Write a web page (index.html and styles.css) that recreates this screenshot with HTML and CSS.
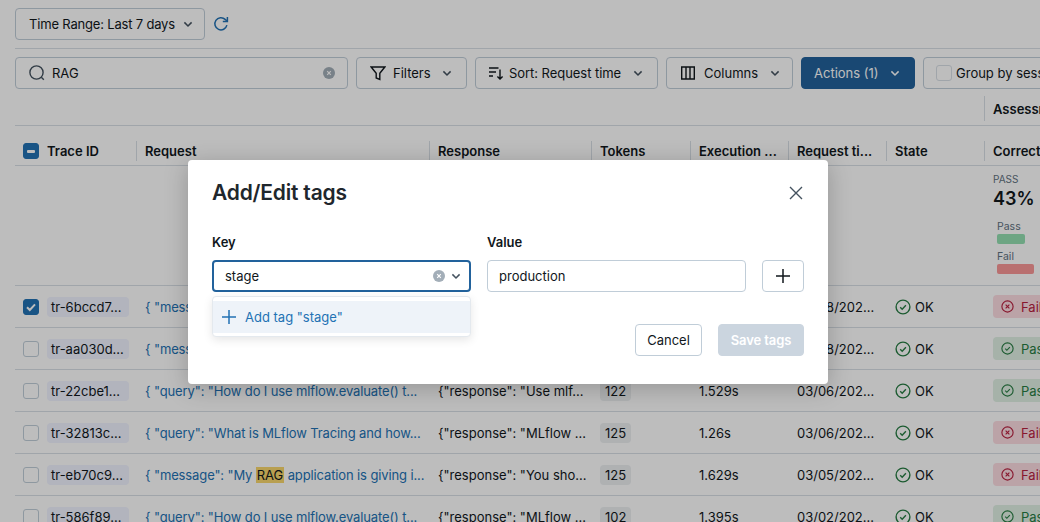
FILE: index.html
```html
<!DOCTYPE html>
<html lang="en">
<head>
<meta charset="utf-8">
<title>Traces</title>
<link rel="stylesheet" href="styles.css">
</head>
<body>
<svg class="defs" width="0" height="0" aria-hidden="true">
  <symbol id="chev" viewBox="0 0 16 16"><path d="M4.4 6.4 8 10 11.6 6.4" fill="none" stroke="currentColor" stroke-width="1.5"/></symbol>
  <symbol id="okc" viewBox="0 0 16 16"><circle cx="8" cy="8" r="6.9" fill="none" stroke="currentColor" stroke-width="1.4"/><path d="M5.2 8.2 7.2 10.2 10.9 6.2" fill="none" stroke="currentColor" stroke-width="1.4"/></symbol>
  <symbol id="xc" viewBox="0 0 16 16"><circle cx="8" cy="8" r="6.9" fill="none" stroke="currentColor" stroke-width="1.4"/><path d="M5.7 5.7 10.3 10.3M10.3 5.7 5.7 10.3" fill="none" stroke="currentColor" stroke-width="1.4"/></symbol>
  <symbol id="clr" viewBox="0 0 12 12"><circle cx="6" cy="6" r="6" fill="currentColor"/><path d="M4.2 4.2 7.8 7.8M7.8 4.2 4.2 7.8" stroke="#fff" stroke-width="1.2"/></symbol>
  <symbol id="plus" viewBox="0 0 16 16"><path d="M8 1v14M1 8h14" fill="none" stroke="currentColor" stroke-width="1.5"/></symbol>
</svg>

<div class="page">
  <div class="top-bar">
    <button class="btn"><span class="range">Time Range: Last 7 days</span><svg class="ic-chev"><use href="#chev"/></svg></button>
    <svg class="refresh" viewBox="0 0 16 16"><path d="M13.9 9.2A6.1 6.1 0 1 1 12.2 3.4L14 5" fill="none" stroke="currentColor" stroke-width="1.5"/><path d="M14.4 1V5.6H9.8" fill="none" stroke="currentColor" stroke-width="1.5"/></svg>
  </div>
  <div class="tools">
    <div class="search">
      <svg class="ic-search" viewBox="0 0 16 16"><circle cx="7.5" cy="7.5" r="6.6" fill="none" stroke="currentColor" stroke-width="1.4"/><path d="M12.3 12.3 14.8 14.8" stroke="currentColor" stroke-width="1.4"/></svg>
      <span class="grow">RAG</span>
      <svg class="ic-clr"><use href="#clr"/></svg>
    </div>
    <button class="btn tool filters">
      <svg class="ic" viewBox="0 0 16 16"><path d="M1.2 2h13.6L9.8 8.2V14.4L6.2 13V8.2Z" fill="none" stroke="currentColor" stroke-width="1.4"/></svg>
      <span>Filters</span><svg class="ic-chev"><use href="#chev"/></svg>
    </button>
    <button class="btn tool sort">
      <svg class="ic" viewBox="0 0 16 16"><path d="M1 3h9.5M1 7h7M1 11h4" stroke="currentColor" stroke-width="1.4"/><path d="M12 4.5v9.5M9.4 11.4 12 14l2.6-2.6" fill="none" stroke="currentColor" stroke-width="1.4"/></svg>
      <span>Sort: Request time</span><svg class="ic-chev"><use href="#chev"/></svg>
    </button>
    <button class="btn tool columns">
      <svg class="ic" viewBox="0 0 16 16"><path d="M1.7 2h12.6v12H1.7ZM6 2v12M10 2v12" fill="none" stroke="currentColor" stroke-width="1.4"/></svg>
      <span>Columns</span><svg class="ic-chev"><use href="#chev"/></svg>
    </button>
    <button class="btn tool actions"><span>Actions (1)</span><svg class="ic-chev"><use href="#chev"/></svg></button>
    <div class="btn tool group"><span class="box faint"></span><span>Group by sessions</span></div>
  </div>

  <div class="grid group-head">
    <div class="span7"></div>
    <div class="th sep">Assessments</div>
  </div>
  <div class="grid head">
    <div class="th first"><span class="box blue"><i class="dash"></i></span>Trace ID</div>
    <div class="th sep">Request</div>
    <div class="th sep">Response</div>
    <div class="th sep">Tokens</div>
    <div class="th sep">Execution ...</div>
    <div class="th sep">Request ti...</div>
    <div class="th sep">State</div>
    <div class="th sep">Correctness</div>
  </div>
  <div class="grid summary">
    <div class="span7"></div>
    <div class="stats">
      <div class="stat-label">PASS</div>
      <div class="stat-value">43%</div>
      <div class="bars">
        <div class="bar-label">Pass</div><div class="bar bar-pass"></div>
        <div class="bar-label">Fail</div><div class="bar bar-fail"></div>
      </div>
    </div>
  </div>

  <div class="grid row">
    <div class="td first"><span class="box blue"><svg class="tick" viewBox="0 0 12 12"><path d="M2 6.2 4.8 9 10 3.4" fill="none" stroke="#fff" stroke-width="2"/></svg></span><span class="tag">tr-6bccd7...</span></div>
    <div class="td link">{ "message": "How do I trace my RAG applic...</div>
    <div class="td">{"response": "To trace ...</div>
    <div class="td"><span class="num">131</span></div>
    <div class="td">1.482s</div>
    <div class="td">03/08/202...</div>
    <div class="td state"><svg class="ic-ok"><use href="#okc"/></svg>OK</div>
    <div class="td"><span class="pill fail"><svg class="ic-pill"><use href="#xc"/></svg>Fail</span></div>
  </div>
  <div class="grid row">
    <div class="td first"><span class="box"></span><span class="tag">tr-aa030d...</span></div>
    <div class="td link">{ "message": "What does the RAG retriever ...</div>
    <div class="td">{"response": "The retri...</div>
    <div class="td"><span class="num">118</span></div>
    <div class="td">1.317s</div>
    <div class="td">03/08/202...</div>
    <div class="td state"><svg class="ic-ok"><use href="#okc"/></svg>OK</div>
    <div class="td"><span class="pill pass"><svg class="ic-pill"><use href="#okc"/></svg>Pass</span></div>
  </div>
  <div class="grid row">
    <div class="td first"><span class="box"></span><span class="tag">tr-22cbe1...</span></div>
    <div class="td link">{ "query": "How do I use mlflow.evaluate() t...</div>
    <div class="td">{"response": "Use mlf...</div>
    <div class="td"><span class="num">122</span></div>
    <div class="td">1.529s</div>
    <div class="td">03/06/202...</div>
    <div class="td state"><svg class="ic-ok"><use href="#okc"/></svg>OK</div>
    <div class="td"><span class="pill pass"><svg class="ic-pill"><use href="#okc"/></svg>Pass</span></div>
  </div>
  <div class="grid row">
    <div class="td first"><span class="box"></span><span class="tag">tr-32813c...</span></div>
    <div class="td link">{ "query": "What is MLflow Tracing and how...</div>
    <div class="td">{"response": "MLflow ...</div>
    <div class="td"><span class="num">125</span></div>
    <div class="td">1.26s</div>
    <div class="td">03/06/202...</div>
    <div class="td state"><svg class="ic-ok"><use href="#okc"/></svg>OK</div>
    <div class="td"><span class="pill fail"><svg class="ic-pill"><use href="#xc"/></svg>Fail</span></div>
  </div>
  <div class="grid row">
    <div class="td first"><span class="box"></span><span class="tag">tr-eb70c9...</span></div>
    <div class="td link">{ "message": "My <mark>RAG</mark> application is giving i...</div>
    <div class="td">{"response": "You sho...</div>
    <div class="td"><span class="num">125</span></div>
    <div class="td">1.629s</div>
    <div class="td">03/05/202...</div>
    <div class="td state"><svg class="ic-ok"><use href="#okc"/></svg>OK</div>
    <div class="td"><span class="pill fail"><svg class="ic-pill"><use href="#xc"/></svg>Fail</span></div>
  </div>
  <div class="grid row">
    <div class="td first"><span class="box"></span><span class="tag">tr-586f89...</span></div>
    <div class="td link">{ "query": "How do I use mlflow.evaluate() t...</div>
    <div class="td">{"response": "MLflow ...</div>
    <div class="td"><span class="num">102</span></div>
    <div class="td">1.395s</div>
    <div class="td">03/02/202...</div>
    <div class="td state"><svg class="ic-ok"><use href="#okc"/></svg>OK</div>
    <div class="td"><span class="pill pass"><svg class="ic-pill"><use href="#okc"/></svg>Pass</span></div>
  </div>
</div>

<div class="overlay"></div>

<div class="modal">
  <div class="modal-head">
    <h2>Add/Edit tags</h2>
    <svg class="close" viewBox="0 0 14 14"><path d="M1 1 13 13M13 1 1 13" fill="none" stroke="currentColor" stroke-width="1.4"/></svg>
  </div>
  <div class="fields">
    <div class="field key">
      <label>Key</label>
      <div class="input focus"><span class="grow">stage</span><svg class="ic-clr"><use href="#clr"/></svg><svg class="ic-chev"><use href="#chev"/></svg></div>
      <div class="dropdown"><div class="option"><svg class="ic-plus"><use href="#plus"/></svg>Add tag "stage"</div></div>
    </div>
    <div class="field value">
      <label>Value</label>
      <div class="input"><span class="grow">production</span></div>
    </div>
    <button class="btn add"><svg class="ic-plus"><use href="#plus"/></svg></button>
  </div>
  <div class="modal-foot">
    <button class="btn cancel">Cancel</button>
    <button class="btn save">Save tags</button>
  </div>
</div>
</body>
</html>
```

FILE: styles.css
```css
* { box-sizing: border-box; }
html, body { margin: 0; height: 100%; overflow: hidden; }
body {
  font-family: Inter, "Liberation Sans", sans-serif;
  font-size: 13px;
  line-height: 20px;
  color: #11171c;
  background: #fff;
  width: 1040px;
  height: 522px;
  position: relative;
}
.defs { position: absolute; }
.page { width: 1040px; height: 522px; padding: 8px 0 0 15px; overflow: hidden; }
.grow { flex: 1; }
svg { display: block; flex: none; }

.top-bar { display: flex; align-items: center; gap: 8px; height: 41px; padding-bottom: 9px; border-bottom: 1px solid #d8dfe6; width: 1025px; }
.btn {
  font: inherit; color: #11171c; background: #fff;
  display: inline-flex; align-items: center; height: 32px; padding: 0 12px 0 13px;
  border: 1px solid #c0cdd8; border-radius: 4px; white-space: nowrap;
}
.top-bar .btn { width: 190px; gap: 5px; }
.range { letter-spacing: -.18px; }
.ic-chev { width: 16px; height: 16px; color: #44525f; }
.refresh { width: 16px; height: 16px; color: #2272b4; }

.tools { display: flex; gap: 8px; margin-top: 8px; width: 1200px; }
.search {
  width: 333px; height: 32px; display: flex; align-items: center; gap: 7px;
  padding: 0 12px 0 13px; border: 1px solid #c0cdd8; border-radius: 4px;
}
.ic-search { width: 16px; height: 16px; color: #44525f; }
.ic-clr { width: 12px; height: 12px; color: #a3aeb8; }
.ic { width: 16px; height: 16px; color: #11171c; }
.tool { gap: 7px; }
.tool .ic-chev { margin-left: 1px; }
.filters { width: 111px; padding-left: 13px; }
.sort { width: 183px; padding-left: 12px; gap: 5px; }
.sort span { letter-spacing: -.05px; }
.sort .ic-chev { margin-left: 4px; }
.columns { width: 127px; padding-left: 13px; gap: 8px; }
.actions { width: 114px; background: #22629c; border-color: #22629c; color: #fff; padding-left: 12px; gap: 8px; }
.actions .ic-chev { color: #fff; margin-left: 0; }
.group { width: 200px; padding-left: 12px; gap: 4px; }

.grid { display: grid; grid-template-columns: 121px 293px 162px 99px 98px 98px 98px 200px; width: 1169px; }
.span7 { grid-column: span 7; }
.group-head { height: 37px; align-items: end; border-bottom: 1px solid #d8dfe6; }
.group-head .th { height: 25px; margin-bottom: 4px; padding-top: 1px; }
.head { height: 40px; border-bottom: 1px solid #d8dfe6; align-items: end; }
.th { font-weight: 600; height: 20px; margin-bottom: 4px; padding-left: 8px; white-space: nowrap; overflow: hidden; display: flex; align-items: center; }
.th.sep { border-left: 1px solid #d8dfe6; }
.th.first { gap: 8px; }

.box { width: 16px; height: 16px; border: 1px solid #c0cdd8; border-radius: 3px; background: #fff; flex: none; display: flex; align-items: center; justify-content: center; }
.box.faint { border-color: #d8dfe6; }
.blue { background: #2272b4; border-color: #2272b4; }
.dash { width: 8px; height: 3px; border-radius: 1px; background: #fff; display: block; }
.tick { width: 12px; height: 12px; }

.summary { height: 120px; border-bottom: 1px solid #d8dfe6; }
.stats { padding: 6px 0 0 9px; }
.stat-label { font-size: 10px; line-height: 15px; color: #5f7281; }
.stat-value { font-size: 18px; line-height: 24px; font-weight: 600; }
.bars { padding: 9px 0 0 4px; }
.bar-label { font-size: 10.5px; line-height: 14px; color: #5f7281; }
.bar { height: 10px; border-radius: 2px; margin-bottom: 6px; }
.bar-pass { width: 28px; background: #93dfb1; }
.bar-fail { width: 37px; background: #fa9797; }

.row { height: 42px; border-bottom: 1px solid #d8dfe6; align-items: center; }
.td { padding-left: 9px; white-space: nowrap; overflow: hidden; display: flex; align-items: center; }
.td.first { gap: 8px; padding-left: 8px; }
.tag { background: #f0f3ff; border-radius: 4px; height: 20px; line-height: 20px; padding: 0 4px; width: 82px; overflow: hidden; }
.link { color: #2272b4; display: block; letter-spacing: -.12px; }
mark { background: #f8d76d; color: #11171c; padding: 0 1px; }
.num { background: #eceff1; border-radius: 4px; padding: 0 5px; height: 20px; }
.state { gap: 4px; }
.ic-ok { width: 16px; height: 16px; color: #277c43; }
.pill { display: inline-flex; align-items: center; gap: 7px; height: 23px; padding: 0 8px; border-radius: 4px; width: 70px; }
.ic-pill { width: 13px; height: 13px; }
.pill.fail { background: #fcdce2; color: #b8213f; }
.pill.pass { background: #e0f0e4; color: #277c43; }

.overlay { position: absolute; inset: 0; background: rgba(0, 0, 0, .26); }

.modal {
  position: absolute; left: 188px; top: 160px; width: 640px; height: 224px;
  background: #fff; border-radius: 4px; box-shadow: 0 4px 24px rgba(0, 0, 0, .22);
  padding: 19px 24px 0; z-index: 2;
}
.modal-head { display: flex; justify-content: space-between; align-items: center; height: 28px; }
h2 { margin: 0; font-size: 21px; line-height: 28px; font-weight: 600; letter-spacing: -.2px; color: #1f272d; }
.close { width: 14px; height: 14px; color: #44525f; margin-right: 1px; }
.fields { display: flex; margin-top: 33px; align-items: flex-end; height: 52px; }
.field { position: relative; width: 259px; }
.field.value { margin-left: 16px; }
label { display: block; font-weight: 600; height: 20px; margin-top: -4px; margin-bottom: 8px; }
.input { display: flex; align-items: center; gap: 3px; height: 32px; padding: 0 11px; border: 1px solid #c0cdd8; border-radius: 4px; }
.focus { border: 2px solid #22629c; padding: 0 5px 0 11px; }
.dropdown {
  position: absolute; left: 0; right: 0; top: 60px; height: 41px; padding: 4px 0;
  background: #fff; border: 1px solid #e4e9ee; border-radius: 4px; box-shadow: 0 3px 10px rgba(0, 0, 0, .1);
}
.option { display: flex; align-items: center; gap: 8px; height: 32px; padding-left: 8px; background: #eef3f9; color: #2272b4; }
.ic-plus { width: 16px; height: 16px; color: inherit; }
.add { width: 42px; justify-content: center; margin-left: 16px; padding: 0; }
.modal-foot { display: flex; justify-content: flex-end; gap: 16px; margin-top: 32px; }
.cancel { width: 67px; justify-content: center; padding: 0; }
.save { width: 86px; justify-content: center; padding: 0; background: #cbd5df; border-color: #cbd5df; color: #fff; font-weight: 600; letter-spacing: -.1px; }
```
